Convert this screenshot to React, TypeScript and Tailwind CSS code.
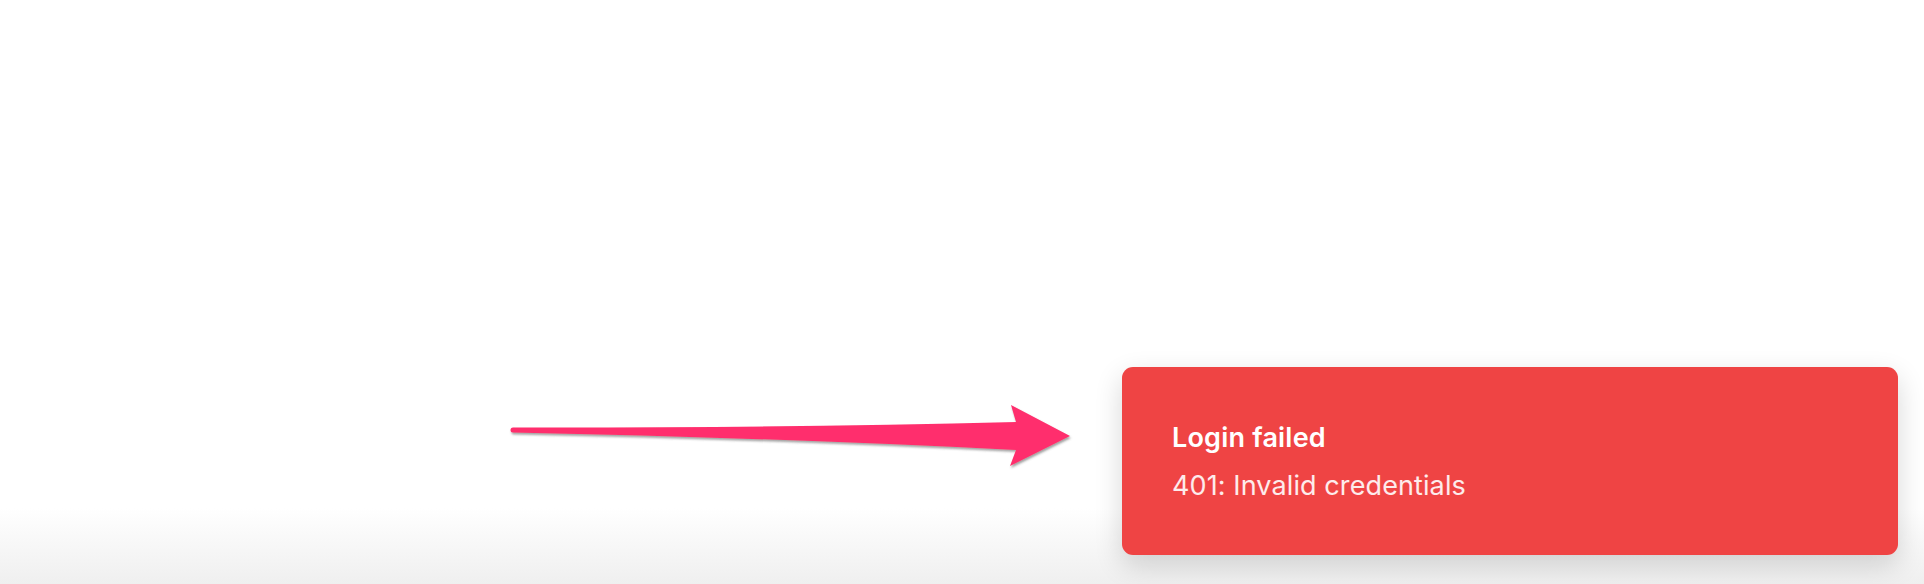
export default function App() {
  return (
    <div
      className="relative w-full h-[584px] overflow-hidden flex items-end justify-end pr-[26px] pb-[29px] bg-[linear-gradient(to_bottom,#ffffff_0%,#ffffff_87%,#efefef_100%)]"
      style={{ fontFamily: 'Inter, "Noto Sans", sans-serif' }}
    >
      <svg
        className="absolute left-0 top-0 pointer-events-none"
        width={1924}
        height={584}
        viewBox="0 0 1924 584"
      >
        <defs>
          <filter id="sh" x="-10%" y="-50%" width="120%" height="200%">
            <feDropShadow dx="1" dy="2" stdDeviation="1" floodColor="#555" floodOpacity="0.55" />
          </filter>
        </defs>
        <path
          d="M513,427.5 Q780,428 1016,422 L1011,405 L1070,436 L1010,466 L1016,450 Q780,438 513,432.5 A2.5,2.5 0 0 1 513,427.5 Z"
          fill="#ff2f6d"
          filter="url(#sh)"
        />
      </svg>
      <div className="relative w-[776px] rounded-[11px] bg-[#ef4444] px-[50px] pt-[55px] pb-[53px] flex flex-col gap-[16px] shadow-[0_10px_28px_rgba(0,0,0,0.16)]">
        <div className="text-[27px] leading-[32px] font-semibold text-white tracking-[0.2px]">Login failed</div>
        <div className="text-[27px] leading-[32px] text-white/90 tracking-[0.1px]">401: Invalid credentials</div>
      </div>
    </div>
  );
}
